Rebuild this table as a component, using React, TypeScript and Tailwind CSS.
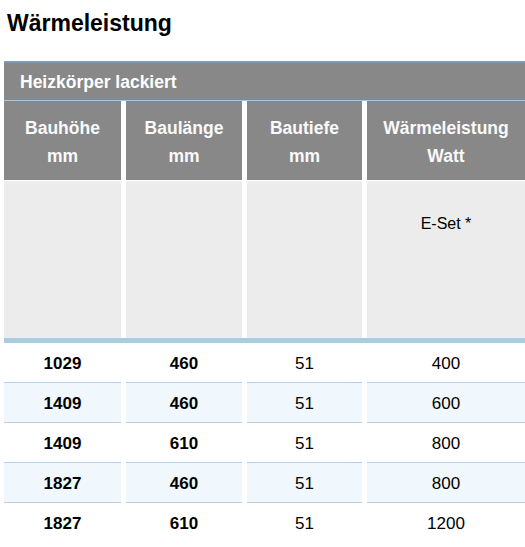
const rows = [
  { hoehe: "1029", laenge: "460", tiefe: "51", watt: "400" },
  { hoehe: "1409", laenge: "460", tiefe: "51", watt: "600" },
  { hoehe: "1409", laenge: "610", tiefe: "51", watt: "800" },
  { hoehe: "1827", laenge: "460", tiefe: "51", watt: "800" },
  { hoehe: "1827", laenge: "610", tiefe: "51", watt: "1200" },
];

const headers = [
  ["Bauhöhe", "mm"],
  ["Baulänge", "mm"],
  ["Bautiefe", "mm"],
  ["Wärmeleistung", "Watt"],
];

const cols = "grid grid-cols-[117px_116px_115px_1fr] gap-x-[5px]";

export default function App() {
  return (
    <div className="w-[525px] h-[547px] overflow-hidden bg-white font-['Liberation_Sans',Arial,sans-serif] text-black">
      <h1 className="pl-[7px] pt-[10px] text-[23px] leading-[26px] font-bold">Wärmeleistung</h1>

      <div className="ml-[4px] mt-[25px]">
        {/* Tabellenkopf */}
        <div className="border-t-2 border-[#7d9cb6] bg-[#888888] border-b border-b-[#a8c6dc] h-[40px] flex items-center pl-[16px] pt-[1px] text-[17.5px] font-bold text-white">
          Heizkörper lackiert
        </div>

        <div className={cols}>
          {headers.map(([a, b]) => (
            <div
              key={a}
              className="h-[80px] bg-[#888888] flex flex-col items-center justify-center pt-[2px] text-[17.5px] leading-[28px] font-bold text-[#fafafa] border-b border-b-white"
            >
              <span>{a}</span>
              <span>{b}</span>
            </div>
          ))}
          {headers.map(([a], i) => (
            <div key={a} className="h-[157px] bg-[#ececec] text-center text-[16px] leading-[20px] pt-[33px]">
              {i === 3 ? "E-Set *" : ""}
            </div>
          ))}
        </div>

        <div className="h-[5px] bg-[#a9cce1]" />

        {rows.map((r, i) => (
          <div key={i} className={cols}>
            {[r.hoehe, r.laenge, r.tiefe, r.watt].map((v, j) => (
              <div
                key={j}
                className={`h-[40px] flex items-center justify-center pt-[2px] text-[17px] ${
                  j < 2 ? "font-bold" : ""
                } ${i % 2 === 1 ? "bg-[#f0f7fd]" : "bg-white"} ${
                  i < rows.length - 1 ? "border-b border-[#b5d1e5]" : ""
                }`}
              >
                {v}
              </div>
            ))}
          </div>
        ))}
      </div>
    </div>
  );
}
